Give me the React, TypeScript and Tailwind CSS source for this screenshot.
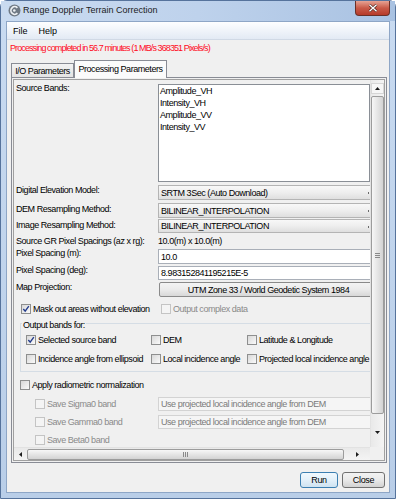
import React from "react";

type Dir = "up" | "down" | "left" | "right";

// tiny black arrow used on scrollbar buttons
function Arrow({ dir }: { dir: Dir }) {
  const vertical = dir === "up" || dir === "down";
  const d = {
    up: "M0 3 L2.5 0 L5 3 Z",
    down: "M0 0 L5 0 L2.5 3 Z",
    left: "M3 0 L3 5 L0 2.5 Z",
    right: "M0 0 L3 2.5 L0 5 Z",
  }[dir];
  return (
    <svg width={vertical ? 5 : 3} height={vertical ? 3 : 5} viewBox={vertical ? "0 0 5 3" : "0 0 3 5"}>
      <path d={d} fill="#1c1c1c" />
    </svg>
  );
}

function CheckBox({ checked = false, disabled = false }: { checked?: boolean; disabled?: boolean }) {
  return (
    <span
      className={
        disabled
          ? "flex h-[10px] w-[10px] shrink-0 items-center justify-center border border-[#c4c4c4] bg-[#f4f4f4]"
          : "flex h-[10px] w-[10px] shrink-0 items-center justify-center border border-[#8e8f8f] bg-gradient-to-br from-[#d8d8d8] to-[#fafafa]"
      }
    >
      {checked && (
        <svg width="8" height="8" viewBox="0 0 8 8">
          <path d="M1.3 4 L3.2 6.2 L6.8 1.2" fill="none" stroke="#233c8c" strokeWidth="1.4" />
        </svg>
      )}
    </span>
  );
}

function Check({ label, checked, disabled }: { label: string; checked?: boolean; disabled?: boolean }) {
  return (
    <div className="flex h-[10px] items-center gap-[2px] whitespace-nowrap">
      <CheckBox checked={checked} disabled={disabled} />
      <span className={disabled ? "text-[#8a8a8a]" : "text-black"}>{label}</span>
    </div>
  );
}

function Combo({ text }: { text: string }) {
  return (
    <div className="relative flex h-full w-[222px] items-center border border-[#b4b4b4] bg-gradient-to-b from-[#f8f8f8] via-[#eeeeee] to-[#dfdfdf] pl-[2px] whitespace-nowrap">
      {text}
      <span className="absolute left-[209px] top-[6px] h-[2px] w-[1px] bg-[#6a6a6a]" />
    </div>
  );
}

function TextField({ text }: { text: string }) {
  return (
    <div className="flex h-full w-[222px] items-center border border-[#a9afb8] bg-white pl-[2px] whitespace-nowrap">
      {text}
    </div>
  );
}

function DisabledField({ text }: { text: string }) {
  return (
    <div className="flex h-full w-[222px] items-center border border-[#d3d3d3] bg-[#f5f5f5] pl-[2px] whitespace-nowrap text-[#7a7a7a]">
      {text}
    </div>
  );
}

function WinButton({ label, primary = false }: { label: string; primary?: boolean }) {
  return (
    <button
      className={
        primary
          ? "flex h-[16px] w-[38px] items-center justify-center rounded-[3px] border border-[#3c7fb1] bg-gradient-to-b from-[#f1f8fd] via-[#e3f0f9] to-[#cfe3f1] text-black"
          : "flex h-[16px] w-[43px] items-center justify-center rounded-[3px] border border-[#707070] bg-gradient-to-b from-[#f3f3f3] via-[#e9e9e9] to-[#d2d2d2] text-black"
      }
    >
      {label}
    </button>
  );
}

export default function App() {
  return (
    <div className="flex h-[499px] w-[396px] flex-col rounded-t-[7px] border border-[#56739c] bg-gradient-to-b from-[#c9dbf1] to-[#b9cee8] font-['Liberation_Sans',Arial,sans-serif] text-[9px] leading-[12px] text-black">
      {/* title bar */}
      <div className="flex h-[20px] items-start justify-between bg-gradient-to-r from-[#cadbf0] via-[#bed2ec] to-[#a9c2e2] pl-[7px] pr-[5px]">
        <div className="flex h-[18px] items-center gap-[2px]">
          <svg width="13" height="13" viewBox="0 0 13 13">
            <circle cx="6.5" cy="6.5" r="6" fill="#6f7984" />
            <path d="M9.4 3.8 A3.8 3.8 0 1 0 9.4 9.2" fill="none" stroke="#eef1f4" strokeWidth="1.7" />
            <circle cx="6.3" cy="6.5" r="1.3" fill="#eef1f4" />
          </svg>
          <span className="text-[9px] text-[#1b1b1b]">Range Doppler Terrain Correction</span>
        </div>
        <div className="flex h-[15px] w-[35px] items-center justify-center rounded-b-[4px] border border-t-0 border-[#6b3027] bg-gradient-to-b from-[#e6a394] via-[#c95a48] to-[#b63a29]">
          <svg width="10" height="8" viewBox="0 0 10 8">
            <path d="M1.5 0.8 L8.5 7.2 M8.5 0.8 L1.5 7.2" stroke="#3a1510" strokeWidth="2.6" />
            <path d="M1.5 0.8 L8.5 7.2 M8.5 0.8 L1.5 7.2" stroke="#ffffff" strokeWidth="1.5" />
          </svg>
        </div>
      </div>

      {/* client area */}
      <div className="mx-[5px] flex h-[472px] flex-col border border-[#8ea6c6] bg-[#f0f0f0]">
        {/* menu bar */}
        <div className="flex h-[18px] shrink-0 items-center gap-[11px] border-b border-[#d0d9e5] bg-gradient-to-b from-[#fdfeff] to-[#e3eaf4] pl-[6px] text-[9px] tracking-normal">
          <span>File</span>
          <span>Help</span>
        </div>

        {/* status message */}
        <div className="mt-[2px] h-[12px] shrink-0 pl-[3px] tracking-[-0.9px] text-[#ff0a1e] whitespace-nowrap">
          Processing completed in 56.7 minutes (1 MB/s 368351 Pixels/s)
        </div>

        {/* tabs */}
        <div className="mt-[6px] flex h-[17px] shrink-0 items-end pl-[4px] tracking-[-0.45px]">
          <div className="flex h-[14px] w-[63px] items-center justify-center border border-b-0 border-[#898c95] bg-gradient-to-b from-[#f3f3f3] to-[#e3e3e3] whitespace-nowrap">
            I/O Parameters
          </div>
          <div className="relative z-10 -mb-[1px] flex h-[18px] w-[93px] items-start justify-center border border-b-0 border-[#898c95] bg-[#fbfbfb] pt-[2px] whitespace-nowrap">
            Processing Parameters
          </div>
        </div>

        {/* tab content */}
        <div className="ml-[4px] mr-[2px] h-[386px] shrink-0 border border-[#898c95] p-[1px] tracking-[-0.45px]">
          <div className="grid h-[382px] grid-cols-[356px_14px] grid-rows-[367px_13px] border border-[#a0a0a0]">
            {/* viewport */}
            <div className="overflow-hidden">
              <div className="flex w-[420px] flex-col">
                {/* Source Bands */}
                <div className="mt-[4px] grid h-[98px] grid-cols-[144px_auto]">
                  <div className="-mt-[2px] pl-[2px]">Source Bands:</div>
                  <div className="h-[98px] w-[212px] border border-[#8a8f96] bg-white pl-[1px]">
                    <div>Amplitude_VH</div>
                    <div>Intensity_VH</div>
                    <div>Amplitude_VV</div>
                    <div>Intensity_VV</div>
                  </div>
                </div>

                <div className="mt-[3px] grid h-[15px] grid-cols-[144px_auto]">
                  <div className="-mt-[1px] pl-[2px]">Digital Elevation Model:</div>
                  <Combo text="SRTM 3Sec (Auto Download)" />
                </div>

                <div className="mt-[3px] grid h-[15px] grid-cols-[144px_auto]">
                  <div className="pl-[2px]">DEM Resampling Method:</div>
                  <Combo text="BILINEAR_INTERPOLATION" />
                </div>

                <div className="mt-[1px] grid h-[14px] grid-cols-[144px_auto]">
                  <div className="pl-[2px]">Image Resampling Method:</div>
                  <Combo text="BILINEAR_INTERPOLATION" />
                </div>

                <div className="mt-[2px] grid h-[12px] grid-cols-[144px_auto]">
                  <div className="pl-[2px] whitespace-nowrap">Source GR Pixel Spacings (az x rg):</div>
                  <div>10.0(m) x 10.0(m)</div>
                </div>

                <div className="mt-[2px] grid h-[15px] grid-cols-[144px_auto]">
                  <div className="-mt-[2px] pl-[2px]">Pixel Spacing (m):</div>
                  <TextField text="10.0" />
                </div>

                <div className="mt-[2px] grid h-[14px] grid-cols-[144px_auto]">
                  <div className="-mt-[2px] pl-[2px]">Pixel Spacing (deg):</div>
                  <TextField text="8.983152841195215E-5" />
                </div>

                <div className="mt-[2px] grid h-[15px] grid-cols-[144px_auto]">
                  <div className="-mt-[1px] pl-[2px]">Map Projection:</div>
                  <div className="ml-[1px] flex h-[15px] w-[219px] items-center justify-center rounded-[2px] border border-[#8a8a8a] bg-gradient-to-b from-[#f4f4f4] via-[#ebebeb] to-[#d8d8d8] whitespace-nowrap">
                    UTM Zone 33 / World Geodetic System 1984
                  </div>
                </div>

                <div className="mt-[7px] grid h-[10px] grid-cols-[144px_auto]">
                  <div className="pl-[7px]">
                    <Check label="Mask out areas without elevation" checked />
                  </div>
                  <div className="pl-[3px]">
                    <Check label="Output complex data" disabled />
                  </div>
                </div>

                {/* output bands group */}
                <fieldset className="ml-[6px] mt-[2px] w-[372px] border border-[#d5dde5] pb-[7px]">
                  <legend className="ml-[1px] px-[1px] pt-[3px] leading-[12px]">Output bands for:</legend>
                  <div className="mt-[4px] grid grid-cols-[125px_96px_auto] pl-[5px]">
                    <Check label="Selected source band" checked />
                    <Check label="DEM" />
                    <Check label="Latitude & Longitude" />
                  </div>
                  <div className="mt-[9px] grid grid-cols-[125px_96px_auto] pl-[5px]">
                    <Check label="Incidence angle from ellipsoid" />
                    <Check label="Local incidence angle" />
                    <Check label="Projected local incidence angle" />
                  </div>
                </fieldset>

                <div className="mt-[8px] pl-[6px]">
                  <Check label="Apply radiometric normalization" />
                </div>

                <div className="mt-[7px] grid h-[13px] grid-cols-[144px_auto] items-center">
                  <div className="pl-[21px]">
                    <Check label="Save Sigma0 band" disabled />
                  </div>
                  <DisabledField text="Use projected local incidence angle from DEM" />
                </div>

                <div className="mt-[5px] grid h-[14px] grid-cols-[144px_auto] items-center">
                  <div className="pl-[21px]">
                    <Check label="Save Gamma0 band" disabled />
                  </div>
                  <DisabledField text="Use projected local incidence angle from DEM" />
                </div>

                <div className="mt-[6px] grid h-[10px] grid-cols-[144px_auto]">
                  <div className="pl-[21px]">
                    <Check label="Save Beta0 band" disabled />
                  </div>
                </div>
              </div>
            </div>

            {/* vertical scrollbar */}
            <div className="flex flex-col border-l border-[#e2e2e2] bg-gradient-to-r from-[#e9e9e9] to-[#f4f4f4]">
              <div className="mt-[3px] flex h-[11px] items-center justify-center border border-[#d6d6d6] bg-[#f6f6f6]">
                <Arrow dir="up" />
              </div>
              <div className="mt-[2px] flex h-[318px] items-center justify-center rounded-[2px] border border-[#9c9c9c] bg-gradient-to-r from-[#f7f7f7] to-[#d3d3d3]">
                <svg width="5" height="5" viewBox="0 0 5 5">
                  <path d="M0 0.5 H5 M0 2.5 H5 M0 4.5 H5" stroke="#8a8a8a" strokeWidth="1" />
                </svg>
              </div>
              <div className="flex flex-1 items-center justify-center pt-[3px]">
                <Arrow dir="down" />
              </div>
            </div>

            {/* horizontal scrollbar */}
            <div className="flex items-center border-t border-[#e2e2e2] bg-gradient-to-b from-[#e9e9e9] to-[#f4f4f4]">
              <div className="flex w-[13px] justify-center">
                <Arrow dir="left" />
              </div>
              <div className="flex h-[11px] w-[317px] items-center justify-center rounded-[2px] border border-[#9c9c9c] bg-gradient-to-b from-[#f7f7f7] to-[#d3d3d3]">
                <svg width="5" height="5" viewBox="0 0 5 5">
                  <path d="M0.5 0 V5 M2.5 0 V5 M4.5 0 V5" stroke="#8a8a8a" strokeWidth="1" />
                </svg>
              </div>
              <div className="flex flex-1 justify-center">
                <Arrow dir="right" />
              </div>
            </div>

            {/* corner */}
            <div className="bg-[#f0f0f0]" />
          </div>
        </div>

        {/* dialog buttons */}
        <div className="mt-[9px] flex h-[16px] shrink-0 justify-end gap-[4px] pr-[4px] tracking-[-0.3px]">
          <WinButton label="Run" primary />
          <WinButton label="Close" />
        </div>
      </div>
    </div>
  );
}
